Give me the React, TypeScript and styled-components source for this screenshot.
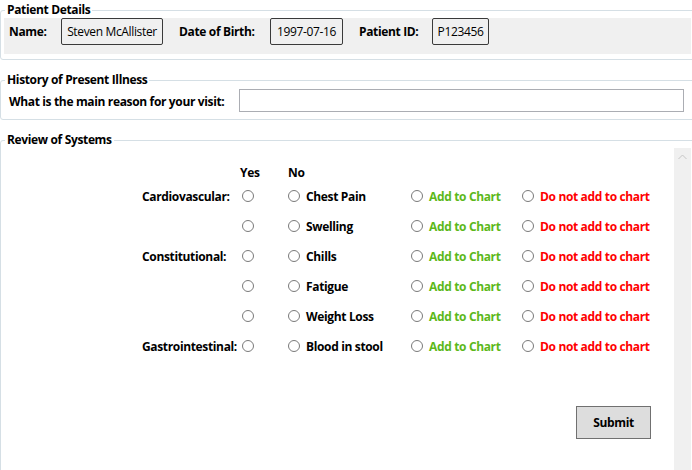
import React from "react";
import styled, { createGlobalStyle } from "styled-components";

const Global = createGlobalStyle`
  html, body { margin: 0; padding: 0; background: #ffffff; }
  * { box-sizing: border-box; }
`;

const Page = styled.div`
  width: 692px;
  height: 470px;
  overflow: hidden;
  background: #ffffff;
  font-family: "Open Sans", "Noto Sans", sans-serif;
  font-size: 12px;
  line-height: 16px;
  letter-spacing: -0.35px;
  color: #000000;
`;

const GroupBox = styled.fieldset<{ $mt: number; $pb: number }>`
  margin: ${(p) => p.$mt}px 0 0 0;
  padding: 0 3px ${(p) => p.$pb}px 3px;
  width: 695px;
  min-width: 0;
  border: 1px solid #d5dfe5;
  border-radius: 3px;
`;

const Legend = styled.legend`
  margin-left: 1px;
  padding: 0 2px;
  font-weight: 700;
  line-height: 16px;
`;

const DetailsPanel = styled.div`
  display: flex;
  align-items: flex-start;
  height: 36px;
  padding-left: 5px;
  background: #f0f0f0;
`;

const FieldLabel = styled.span<{ $w: number; $ml?: number }>`
  width: ${(p) => p.$w}px;
  margin-left: ${(p) => p.$ml ?? 0}px;
  line-height: 27px;
  font-weight: 700;
  white-space: nowrap;
`;

const ValueBox = styled.span<{ $w: number }>`
  width: ${(p) => p.$w}px;
  height: 27px;
  border: 1px solid #3a3a3a;
  border-radius: 2px;
  line-height: 25px;
  text-align: center;
  white-space: nowrap;
`;

const ReasonRow = styled.div`
  display: flex;
  align-items: center;
  padding-top: 1px;
`;

const ReasonLabel = styled.label`
  width: 235px;
  padding-left: 5px;
  padding-top: 2px;
  font-weight: 700;
  white-space: nowrap;
`;

const ReasonInput = styled.input`
  width: 445px;
  height: 23px;
  margin: 0;
  border: 1px solid #abadb3;
  background: #ffffff;
  font: inherit;
  padding: 0 3px;
  outline: none;
`;

const ScrollArea = styled.div`
  display: flex;
  height: 330px;
`;

const ScrollContent = styled.div`
  flex: 1;
  display: flex;
  flex-direction: column;
  padding-top: 1px;
`;

const Scrollbar = styled.div`
  width: 17px;
  background: #f0f0f0;
  display: flex;
  flex-direction: column;
`;

const ScrollArrow = styled.div`
  height: 18px;
  display: flex;
  align-items: center;
  justify-content: center;
`;

const SystemsGrid = styled.div`
  display: grid;
  grid-template-columns: 225px 59px 123px 111px 1fr;
  grid-template-rows: 33px repeat(6, 30px);
  font-weight: 700;
`;

const HeaderCell = styled.div<{ $pl?: number }>`
  align-self: end;
  padding-bottom: 1px;
  padding-left: ${(p) => p.$pl ?? 0}px;
`;

const SystemLabel = styled.div`
  align-self: center;
  padding-left: 138px;
  white-space: nowrap;
`;

const OptionCell = styled.label<{ $color?: string; $pl?: number }>`
  display: flex;
  align-items: center;
  gap: 6px;
  padding-left: ${(p) => p.$pl ?? 0}px;
  color: ${(p) => p.$color ?? "#000000"};
  white-space: nowrap;
`;

const Radio = styled.input.attrs({ type: "radio" })`
  appearance: none;
  -webkit-appearance: none;
  width: 12px;
  height: 12px;
  margin: 0 0 2px 0;
  border: 1px solid #7a7a7a;
  border-radius: 50%;
  background: #ffffff;
  flex: none;
`;

const Footer = styled.div`
  display: flex;
  justify-content: flex-end;
  padding-right: 23px;
  margin-top: 44px;
`;

const SubmitButton = styled.button`
  width: 75px;
  height: 33px;
  border: 1px solid #707070;
  background: #dddddd;
  font: inherit;
  font-weight: 700;
  letter-spacing: -0.35px;
  color: #000000;
  padding: 1px 0 0 0;
`;

type Row = { system: string; symptom: string };

const rows: Row[] = [
  { system: "Cardiovascular:", symptom: "Chest Pain" },
  { system: "", symptom: "Swelling" },
  { system: "Constitutional:", symptom: "Chills" },
  { system: "", symptom: "Fatigue" },
  { system: "", symptom: "Weight Loss" },
  { system: "Gastrointestinal:", symptom: "Blood in stool" },
];

export default function App() {
  return (
    <Page>
      <Global />
      <GroupBox $mt={2} $pb={5}>
        <Legend>Patient Details</Legend>
        <DetailsPanel>
          <FieldLabel $w={52}>Name:</FieldLabel>
          <ValueBox $w={102}>Steven McAllister</ValueBox>
          <FieldLabel $w={91} $ml={16}>Date of Birth:</FieldLabel>
          <ValueBox $w={73}>1997-07-16</ValueBox>
          <FieldLabel $w={73} $ml={16}>Patient ID:</FieldLabel>
          <ValueBox $w={57}>P123456</ValueBox>
        </DetailsPanel>
      </GroupBox>

      <GroupBox $mt={12} $pb={7}>
        <Legend>History of Present Illness</Legend>
        <ReasonRow>
          <ReasonLabel htmlFor="reason">What is the main reason for your visit:</ReasonLabel>
          <ReasonInput id="reason" type="text" />
        </ReasonRow>
      </GroupBox>

      <GroupBox $mt={12} $pb={0}>
        <Legend>Review of Systems</Legend>
        <ScrollArea>
          <ScrollContent>
            <SystemsGrid>
              <div />
              <HeaderCell $pl={11}>Yes</HeaderCell>
              <HeaderCell>No</HeaderCell>
              <div />
              <div />
              {rows.map((r, i) => (
                <React.Fragment key={i}>
                  <SystemLabel>{r.system}</SystemLabel>
                  <OptionCell $pl={13}>
                    <Radio name={`yn${i}`} />
                  </OptionCell>
                  <OptionCell>
                    <Radio name={`yn${i}`} />
                    {r.symptom}
                  </OptionCell>
                  <OptionCell $color="#5cb81a">
                    <Radio name={`chart${i}`} />
                    Add to Chart
                  </OptionCell>
                  <OptionCell $color="#ff0000">
                    <Radio name={`chart${i}`} />
                    Do not add to chart
                  </OptionCell>
                </React.Fragment>
              ))}
            </SystemsGrid>
            <Footer>
              <SubmitButton type="button">Submit</SubmitButton>
            </Footer>
          </ScrollContent>
          <Scrollbar>
            <ScrollArrow>
              <svg width="9" height="6" viewBox="0 0 9 6">
                <path d="M0.5 5 L4.5 1 L8.5 5" fill="none" stroke="#c5c5c5" strokeWidth="1" />
              </svg>
            </ScrollArrow>
          </Scrollbar>
        </ScrollArea>
      </GroupBox>
    </Page>
  );
}
